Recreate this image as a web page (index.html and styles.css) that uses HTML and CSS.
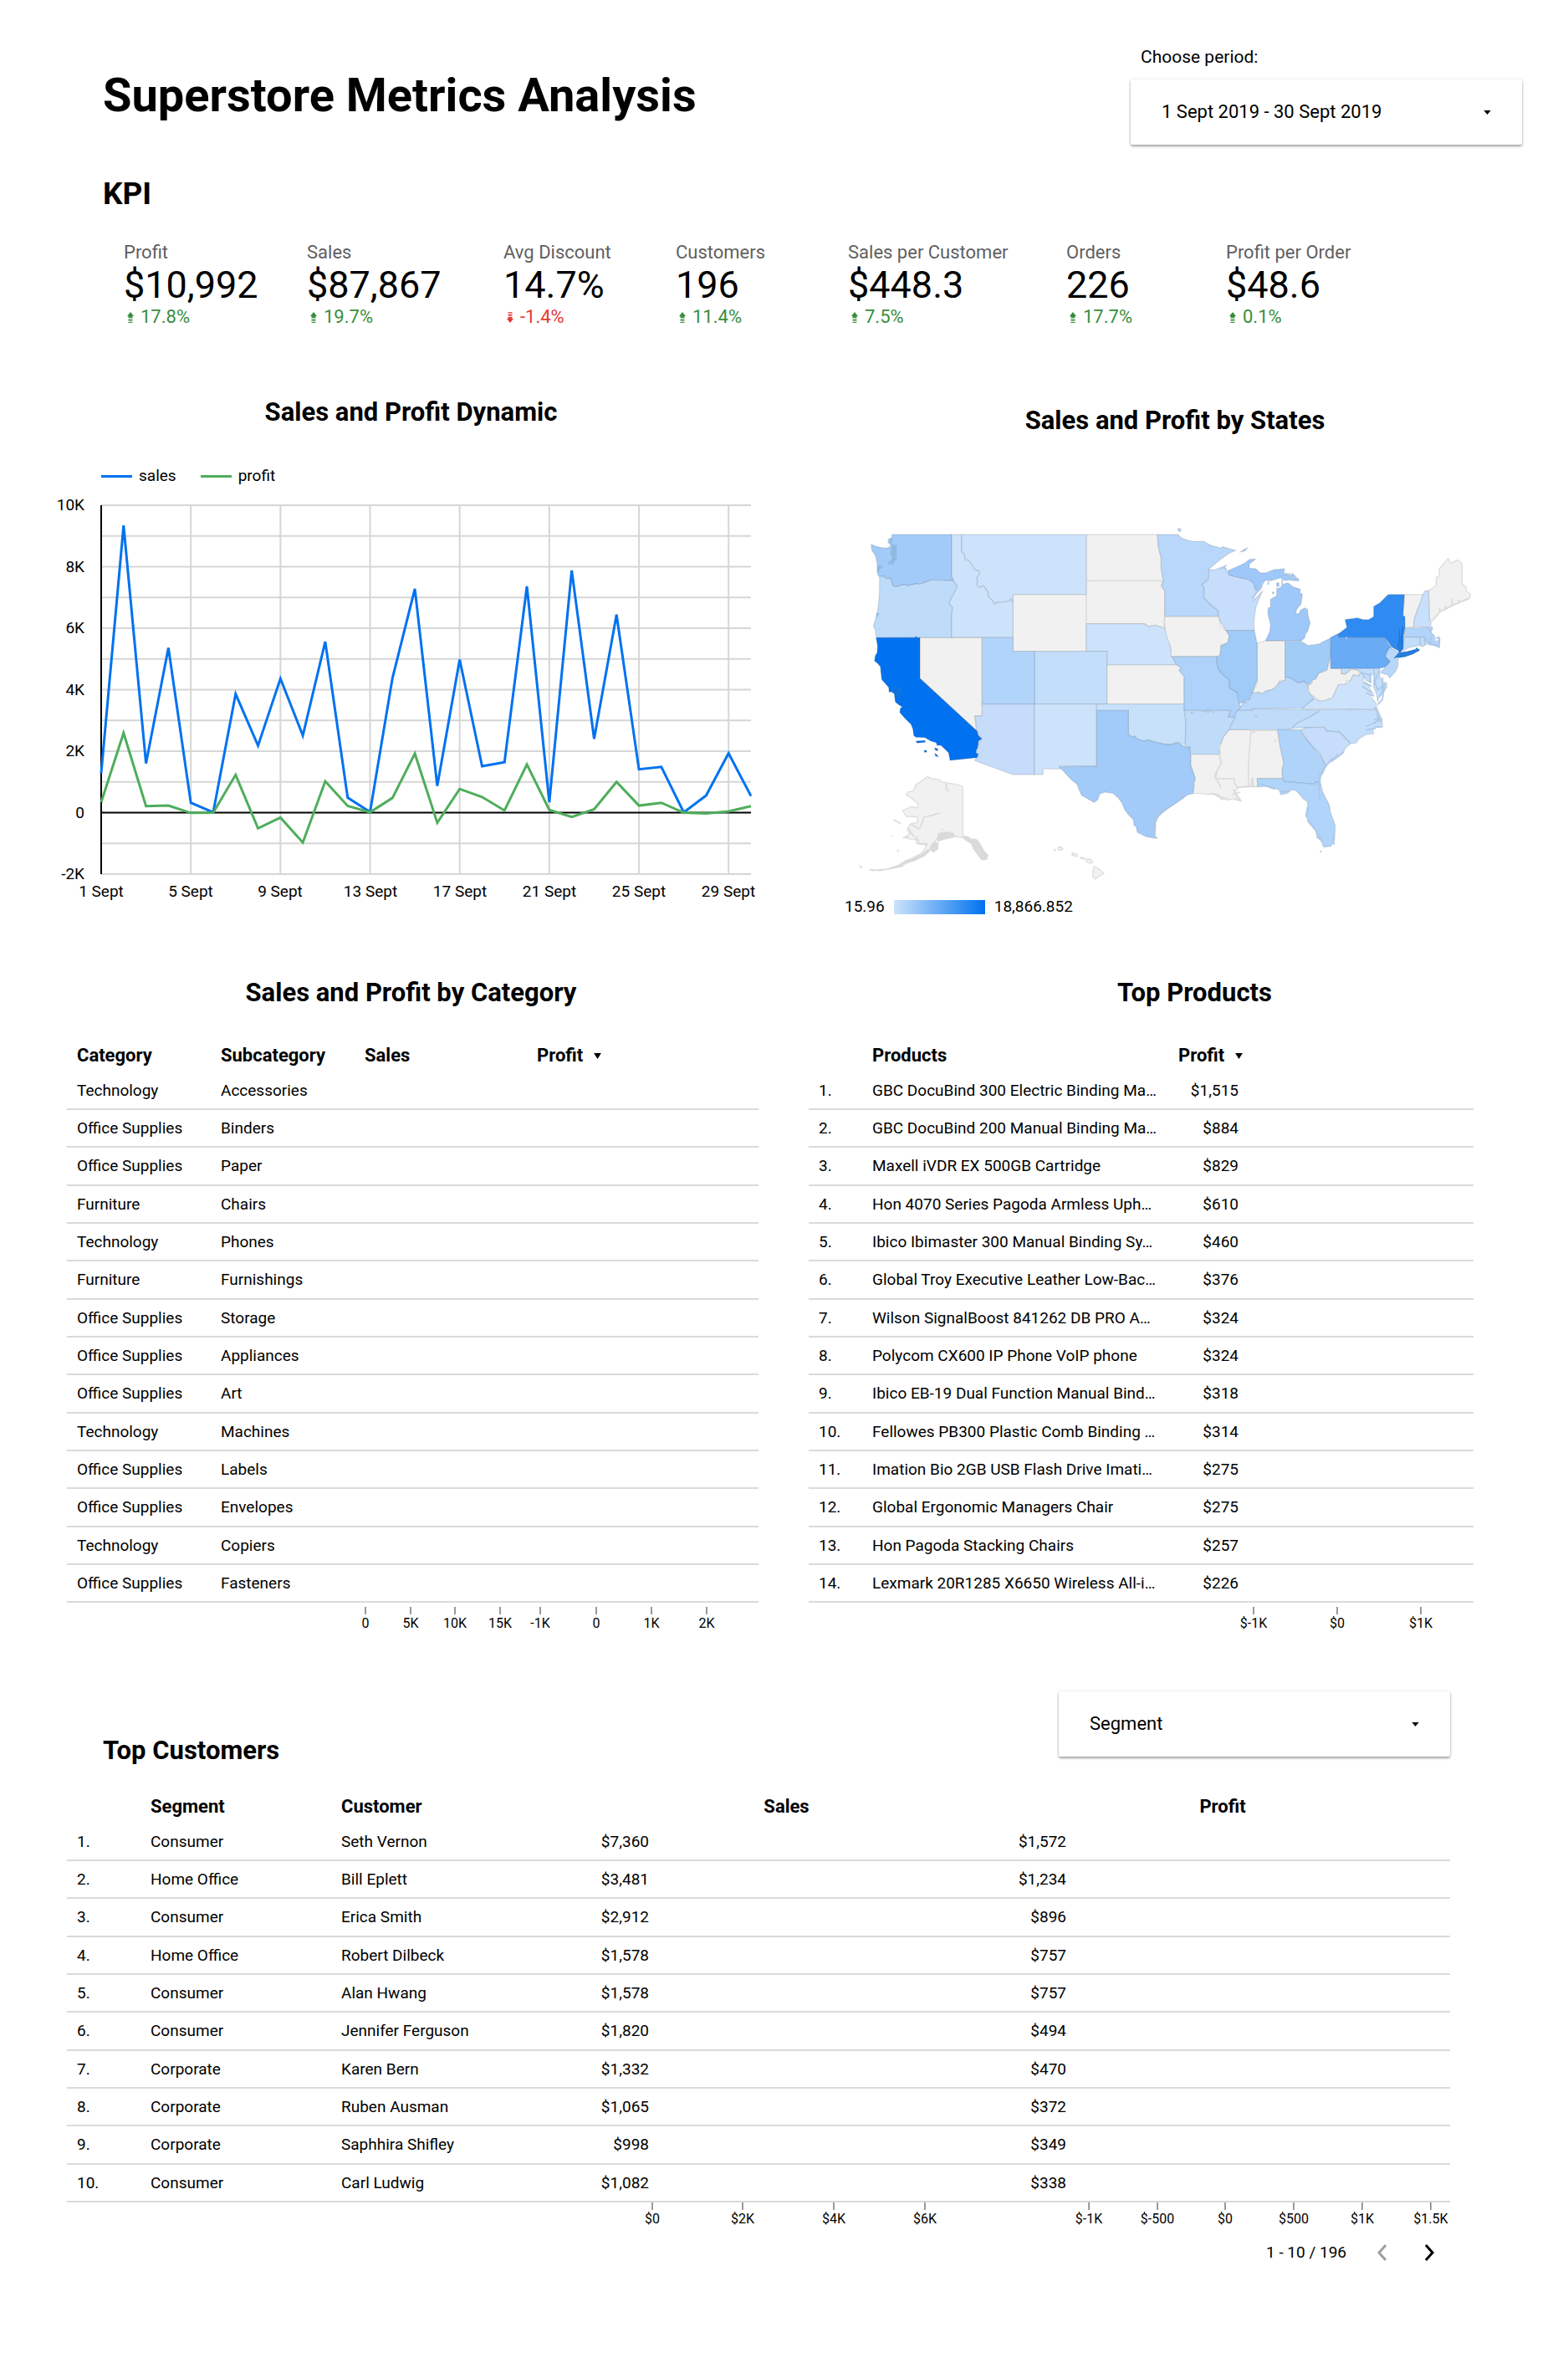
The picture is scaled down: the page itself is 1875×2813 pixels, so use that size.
FILE: index.html
```html
<!DOCTYPE html>
<html lang="en">
<head>
<meta charset="utf-8">
<title>Superstore Metrics Analysis</title>
<link rel="stylesheet" href="styles.css">
</head>
<body>
<svg class="sprite" aria-hidden="true">
  <symbol id="up" viewBox="0 0 8 13"><path d="M4 0L8 5H6.500V7H1.500V5H0zM1.500 8H6.500V9.300H1.500zM1.500 10H6.500V11H1.500zM1.500 12H6.500V13H1.500z"/></symbol>
  <symbol id="down" viewBox="0 0 8 13"><path d="M4 13L8 8H6.500V6H1.500V8H0zM1.500 3.700H6.500V5H1.500zM1.500 2H6.500V3H1.500zM1.500 0H6.500V1H1.500z"/></symbol>
  <symbol id="caret" viewBox="0 0 10 6"><path d="M0 0H10L5 6z"/></symbol>
  <symbol id="sort" viewBox="0 0 10 8"><path d="M0 0H10L5 8z"/></symbol>
</svg>
<header class="top">
  <h1>Superstore Metrics Analysis</h1>
  <div class="period">
    <label for="period">Choose period:</label>
    <button id="period" class="control" type="button"><span>1 Sept 2019 - 30 Sept 2019</span><svg class="caret"><use href="#caret"/></svg></button>
  </div>
</header>
<main>
<section>
  <h2 class="kpi-title">KPI</h2>
  <div class="kpis">
    <div class="kpi"><span class="name">Profit</span><span class="value">$10,992</span><span class="delta"><svg><use href="#up"/></svg>17.8%</span></div>
    <div class="kpi"><span class="name">Sales</span><span class="value">$87,867</span><span class="delta"><svg><use href="#up"/></svg>19.7%</span></div>
    <div class="kpi"><span class="name">Avg Discount</span><span class="value">14.7%</span><span class="delta fall"><svg><use href="#down"/></svg>-1.4%</span></div>
    <div class="kpi"><span class="name">Customers</span><span class="value">196</span><span class="delta"><svg><use href="#up"/></svg>11.4%</span></div>
    <div class="kpi"><span class="name">Sales per Customer</span><span class="value">$448.3</span><span class="delta"><svg><use href="#up"/></svg>7.5%</span></div>
    <div class="kpi"><span class="name">Orders</span><span class="value">226</span><span class="delta"><svg><use href="#up"/></svg>17.7%</span></div>
    <div class="kpi"><span class="name">Profit per Order</span><span class="value">$48.6</span><span class="delta"><svg><use href="#up"/></svg>0.1%</span></div>
  </div>
</section>
<div class="charts">
<section class="dynamic">
  <h2>Sales and Profit Dynamic</h2>
  <div class="legend"><span class="key sales">sales</span><span class="key profit">profit</span></div>
  <svg class="plot" viewBox="0 0 847 500" role="img" aria-label="Daily sales and profit">
    <svg x="61" y="23" width="777" height="441" viewBox="0 0 290 1200" preserveAspectRatio="none" overflow="visible">
      <path class="grid" d="M0 0H290M0 100H290M0 200H290M0 300H290M0 400H290M0 500H290M0 600H290M0 700H290M0 800H290M0 900H290M0 1100H290M0 1200H290M40 0V1200M80 0V1200M120 0V1200M160 0V1200M200 0V1200M240 0V1200M280 0V1200"/>
      <path class="axis" d="M0 0V1200M0 1000H290"/>
      <polyline class="line sales" points="0,872 10,66 20,840 30,464 40,968 50,999 60,614 70,782 80,564 90,749 100,444 110,951 120,998 130,562 140,272 150,913 160,502 170,849 180,836 190,264 200,966 210,212 220,760 230,356 240,859 250,851 260,999 270,944 280,807 290,946"/>
      <polyline class="line profit" points="0,966 10,741 20,979 30,977 40,1001 50,1000 60,877 70,1051 80,1016 90,1097 100,898 110,978 120,999 130,952 140,808 150,1033 160,923 170,949 180,993 190,843 200,991 210,1014 220,989 230,900 240,977 250,968 260,1000 270,1003 280,996 290,979"/>
    </svg>
    <g class="ylab"><text x="41" y="29">10K</text><text x="41" y="103">8K</text><text x="41" y="176">6K</text><text x="41" y="250">4K</text><text x="41" y="323">2K</text><text x="41" y="397">0</text><text x="41" y="470">-2K</text></g>
    <g class="xlab"><text x="61" y="491">1 Sept</text><text x="168" y="491">5 Sept</text><text x="275" y="491">9 Sept</text><text x="383" y="491">13 Sept</text><text x="490" y="491">17 Sept</text><text x="597" y="491">21 Sept</text><text x="704" y="491">25 Sept</text><text x="811" y="491">29 Sept</text></g>
  </svg>
</section>
<section class="states">
  <h2>Sales and Profit by States</h2>
  <svg class="map" viewBox="0 0 2400 1380" role="img" aria-label="Sales by state">
    <g class="state">
      <path fill="#f1f1f1" d="M957 117H1212L1215 160 1225 200 1232 283H957zM957 283H1234L1226 300 1239 320V410L1233 430 1241 455 1205 442 1180 447 1165 437H957zM694 332H957V536H694zM360 487H583V768H557L563 822 360 633zM1031 584H1285L1297 595 1290 605 1307 625V725H1031z"/>
      <path fill="#a2cbf9" d="M260 117H474V265L480 282 402 280 380 288 360 295 345 294 320 300 300 297 275 305 262 300 255 275 240 275 230 266 215 268 209 262 211 240 205 215 203 200 196 185 188 175 185 152 200 158 215 163 240 166 250 163 255 155 244 143 258 138z"/>
      <path fill="#bedbfa" d="M215 268L230 266 240 275 255 275 262 300 275 305 300 297 320 300 345 294 360 295 380 288 402 280 480 282 494 302 482 330 473 345 465 365 478 378 474 400V487L203 485 200 460 193 445 199 425 207 400 213 350 215 320z"/>
      <path fill="#cce3fb" d="M474 117H510V178L520 187 522 205 535 210 545 222 558 243 574 248 572 262 564 272 568 285 563 295 575 308 588 300 606 325V340L618 350 628 366 635 360 660 358 682 355 685 346 694 358V486H474V400L478 378 465 365 473 345 482 330 494 302 480 282 474 265z"/>
      <path fill="#cce3fb" d="M510 117H957V332H694V358L685 346 682 355 660 358 635 360 628 366 618 350 606 340V325L588 300 575 308 563 295 568 285 564 272 572 262 574 248 558 243 545 222 535 210 522 205 520 187 510 178z"/>
      <path fill="#cce3fb" d="M957 437H1165L1180 447 1205 442 1241 455 1252 480 1260 520 1263 553 1272 565 1280 584H1031V536H957z"/>
      <path fill="#c3defb" d="M771 536H1031V725H771z"/>
      <path fill="#b1d4fa" d="M583 487H694V536H771V725H583z"/>
      <path fill="#c6dcfb" d="M583 725H771V978H694L556 928 570 905 562 890 572 880 570 865 582 850 565 822 557 768H583z"/>
      <path fill="#cce3fb" d="M771 725H994V948H860L865 958H802V978H771z"/>
      <path fill="#c8e1fb" d="M994 725H1307L1310 760 1314 790 1312 870 1285 862 1262 870 1240 870 1200 860 1180 854 1165 858 1140 850 1130 840 1125 845 1108 835V748H994z"/>
      <path fill="#a2cbf9" d="M994 748H1108V835L1125 845 1130 840 1140 850 1165 858 1180 854 1200 860 1240 870 1262 870 1285 862 1312 878 1330 880 1332 945 1349 990 1343 1005 1342 1045 1318 1052 1300 1066 1268 1088 1250 1100 1230 1115 1215 1130 1206 1150 1204 1200 1213 1207 1200 1206 1170 1200 1140 1185 1136 1165 1128 1160 1126 1140 1110 1124 1095 1105 1085 1080 1072 1062 1052 1045 1022 1041 1005 1048 998 1068 985 1078 940 1052 930 1030 923 1012 905 998 860 950 994 948z"/>
      <path fill="#0072f0" d="M203 487H360V633L565 822 570 838 582 850 570 858 568 880 562 890V900L569 905 565 917 468 927 463 900 448 885 435 873 422 873 418 863 400 858 378 845 345 844 338 838 335 815 328 797 310 780 288 755 290 740 297 735 285 728 272 718 268 688 256 680 250 683 248 665 223 637 218 590 207 578 197 570 200 552 207 540 208 515zM346 858L378 856 380 862 350 865zM376 891h8v7h-8zM413 882l12 4-2 7-8-3zM413 902l10 6 2 7-9-4z"/>
    </g>
    <path class="coast pacific" d="M262 150L270 160 276 150 275 210 268 208 266 224 258 220 245 224 262 200 254 185zM207 228l18 3-8 10-10 14zM245 135l14-5v20l-6-8zM205 398l8 3-8 14z"/>
    <path class="coast deep" d="M268 662l12 5 12 7-14 5 10 7-8 4 8 14-15-14-12-12zM346 482v16"/>
    <g class="state" transform="translate(1140 0)">
      <path fill="#b8d7fa" d="M72 117H145L160 130 180 137 200 142 240 142 258 155 280 160 300 166 305 160 330 168 355 174 330 184 300 205 258 240 256 275 232 298 240 308 238 343 265 370 290 390 292 410H98V320L86 300 93 283 85 240V200L75 160zM145 95l12 2-2 10-8-2z"/>
      <path fill="#c6ddfb" d="M256 243L278 243 305 233 322 247 330 262 380 275 400 278 418 292 422 310 425 325 415 355 450 318 436 350 425 380 418 430 420 461H318L297 430 292 410 290 390 265 370 238 343 240 308 232 298 256 275z"/>
      <path fill="#9fc8fa" d="M325 247L360 232 385 220 403 206 425 205 402 223 402 238 425 240 440 254 460 255 490 243 528 240 525 258 550 265 557 255 563 272 578 275 578 284 545 280 530 282 515 272 490 280 478 283 470 278 455 285 445 305 430 325 422 310 418 292 400 278 380 275 330 262zM368 180L397 163 385 176zM500 290h8v13h-8zM485 323h5v6h-5z"/>
      <path fill="#9fc8fa" d="M500 310L510 310 525 295 540 290 560 305 585 313 583 326 592 330 588 365 572 385 568 400 578 402 587 388 600 380 611 386 613 410 620 435 615 450 612 463 603 475 600 488 592 495 588 498 460 498 475 465 478 440 468 400 470 380 478 378 478 350 490 342 500 337z"/>
      <path fill="#f1f1f1" d="M98 412H292L295 425 300 448 318 461 330 480 325 505 300 515 297 550 285 555 120 553 122 535 118 515 108 490 100 458 98 430zM430 505L440 503 460 498 530 500V640H510L508 650 492 668 478 675 462 678 450 688 435 683 412 688 420 670 430 650zM692 550L694 597H732V615L745 618 770 600 795 605 795 625 775 620 765 640 750 642 745 655 722 655 700 702 675 712 655 715 635 700 620 690 612 660 628 650 628 638 640 635 650 615 680 605zM958 332H1025L1018 365 1010 375 995 410 992 450H960L958 410 953 408 957 365zM1045 318L1072 300V270L1083 265V240L1115 202 1125 220 1150 208 1165 222V295L1180 305 1180 320 1195 330 1195 343 1170 352 1150 365 1130 372 1110 380 1085 395 1070 415 1056 428 1048 420zM408 820H503L513 880 525 935 520 960V992H430L432 1020 418 1022 412 990 408 1022 400 1022 398 960 403 880zM330 817H408L403 880 398 960 400 1022 360 1025 348 1008 348 993H280L290 955 300 940 295 905V880L310 840zM192 905H293L302 935 290 955 280 975V993H348L348 1010 362 1028 350 1040 360 1055 372 1070 340 1065 330 1070 310 1065 300 1068 290 1050 270 1045 255 1050 230 1046 200 1045 208 990 192 945z"/>
      <path fill="#a0cbf8" d="M318 461H420L428 500 430 510V640L420 665 410 690 406 708 392 712 388 720 378 718 365 724 358 685 328 665 330 638 312 625 290 600 283 570 285 555 297 550 300 515 325 505 330 480z"/>
      <path fill="#a2ccf8" d="M530 500H588L612 515 650 510 690 490 692 550 680 602 650 615 640 635 628 638 622 652 612 655 600 645 575 648 550 632 530 628z"/>
      <path fill="#aed2fa" d="M125 555H285L283 570 290 600 312 625 330 638 328 665 358 685 362 718 372 735 360 748 352 772 325 772 335 748H168V625L150 605 157 595 140 584z"/>
      <path fill="#bad8fa" d="M360 748L372 735 378 718 392 720 398 710 412 702 412 685 435 683 450 688 462 678 478 675 492 668 508 650 510 645 530 640V628L550 632 575 648 600 645 612 655 613 680 635 705 595 740 412 742V748z"/>
      <path fill="#69abf5" d="M692 487L722 472V485H888L898 505 912 525 895 540 890 555 908 572 890 592 865 598H694z"/>
      <path fill="#2f8bf2" d="M745 422L790 416 810 422 830 422 848 412V375L870 362 900 332H958L953 408 960 412V452L955 480V525L945 537 925 528 912 520 888 485H722L720 475 752 450zM922 562L935 545 965 540 990 532 1012 530 990 545 960 555z"/>
      <path fill="#c8e0fb" d="M1025 332L1030 320 1045 318 1048 420 1055 438 1045 448H992V425L1010 375z"/>
      <path fill="#b1d4fa" d="M960 452H1000L1045 450 1055 446 1060 453 1053 468 1066 480 1068 500 1081 498 1078 484 1086 490 1084 522 1062 515 1045 512 1030 485H958z"/>
      <path fill="#c3defb" d="M958 485H1015V515L975 522 953 535zM1015 485H1030L1040 510 1022 520 1015 515z"/>
      <path fill="#b8d7fa" d="M905 522L935 538V590L925 610 905 632 900 622 872 612 890 592 908 572 890 555 895 540z"/>
      <path fill="#c3defb" d="M732 598H868L870 625 880 645 895 650V665L880 690 868 700 862 718 858 690 848 665 850 620 835 618 840 650 820 640 810 620 795 605 770 598 745 618 732 615z"/>
      <path fill="#cce3fb" d="M590 742L635 705 655 715 675 712 700 702 722 655 745 655 765 640 775 620 795 625 800 610 815 630 808 640 840 660 830 665 848 690 835 695 855 720 862 745z"/>
      <path fill="#c3defb" d="M550 812L570 795 620 770 650 752V745H862L878 780 880 808 862 808 845 818 848 832 820 835 795 850 785 865 765 867 725 825 680 822 670 808 600 810z"/>
      <path fill="#bedbfa" d="M358 748H412V742L650 745V752L620 770 570 795 550 817H330L340 790z"/>
      <path fill="#c6ddfb" d="M587 820L600 810 670 808 680 822 725 825 765 867 745 885 740 900 715 920 675 945 655 900 630 880 610 855z"/>
      <path fill="#b0d3fa" d="M503 817H590L587 825 610 855 630 880 655 905 675 945 660 975 655 1008 640 1004 635 1014 525 1002 520 985V960L525 935 513 880z"/>
      <path fill="#b1d4fa" d="M430 992H520L528 1003 635 1012 640 1004 658 1010 665 1040 690 1090 692 1110 710 1160 708 1210 695 1235 668 1238 660 1215 645 1205 640 1180 612 1148 605 1120 612 1105 610 1075 595 1065 570 1035 550 1032 540 1045 515 1050 510 1035 490 1025 470 1020 432 1022z"/>
      <path fill="#bedbfa" d="M170 748H335L325 772H352L335 800 330 817 310 840 295 880V905H190V880L172 876 174 790z"/>
    </g>
    <g transform="translate(1140 0)">
      <path class="coast" d="M800 612l38 10M810 650l30 10M806 660l35 24M820 685l30 12M838 620l-5 28M850 600v60M870 600l-18 45 10 30 25-20-8 55-18 18M880 630v45l-12 25M765 740v8M850 735l12 20 0 25 14 0-30 12M862 762l12 25-24-8M820 805l36-14M820 818l30-5M874 808l-22-2M740 895l-20 20M720 905l-22 25M700 918l-25 32M675 950l-14 30M655 970v50M650 1010l4 55M440 1010l30 12 25 8M510 1040l40-3M610 1095l-5 35M615 1145l30 40M650 1190l12 30M700 1195l6 35M1045 452l10 20M1045 508l15-30M1050 505l35 15M1070 490l12-4v38M1015 485v30M1030 488v25M230 750l30 4M250 740l25 16M250 150l20 12M310 230l10 14M300 240l20-14M450 290l-10 20M470 280v18M520 275v25M412 345l35-40M530 255l28 15M560 260l18 22M545 255l5 25M655 1252l6 4M750 484v8M420 765l10 8"/>
      <path class="coast" d="M190 755l12 3M60 1120l40-25 20-10M55 1140l22-25M50 1150l20-15M60 1160v40M55 1165l12 0M150 1050l14 10M160 1045l5 20"/>
      <path class="coast north" d="M1060 425l20-25M1085 400v-18M1095 390l40-20M1105 388v-16M1128 375v-28M1130 370l60-22M1150 365l5-14M260 1045l35 10M285 1055l40 12M345 1030l10 25 15 15M340 1050l30-10M345 1065l28 8M395 1020l35 2M355 1025l45-5M298 870l-5 20M300 895l-8 15M285 970l-8 16M285 995l15 30M408 820l15 8M500 855l-10 4M412 1020l4-30"/>
      <path class="coast deep filled" d="M940 455v30l-6 30 6 27 8-10 4-85-8 60M922 560l16-18 30-4 30-8 4-6 10 8-24 12-28 10-30 2z"/>
    </g>
    <g class="state" fill="#f1f1f1">
      <path d="M388 985L400 992 430 996 440 1005 475 1010 500 1015 514 1022V1200L530 1205 550 1210 570 1235 585 1255 602 1270 598 1283 580 1282 560 1255 545 1225 520 1207 490 1200 470 1190 440 1190 425 1205 412 1220 395 1245 370 1268 340 1285 300 1302 270 1312 220 1322 180 1320 240 1318 290 1300 330 1280 365 1260 380 1240 385 1225 348 1225V1212L325 1210 305 1203 322 1190 315 1175 325 1155 350 1150 352 1130 310 1128 298 1107 330 1092 350 1098 355 1085 332 1065 310 1050 318 1040 335 1038 345 1015z"/>
      <path d="M855 1240l12-4 6 8-6 6-10-2zM840 1248l6-2 0 6zM905 1258l20 6-3 8-15-4zM935 1274l15 2-2 6-10-3zM955 1280l18 2 8 10-10 5-14-6zM985 1308L1005 1318 1020 1333 1003 1342 990 1354 980 1345 980 1325z"/>
    </g>
    <path class="coast north filled" d="M516 1199l18 2 12 14 8-7 14 6 14 24 10 16 12 12-4 16-18 2-16-24-14-16-6-18-24-14zM425 1190l30-6 24 4 8 12-20 6-20 4-24 8zM402 1228l14-8 10 4-2 22-16 10-10-6zM332 1278l36-14 20-18 8 6-20 18-34 16-34 10-20 4 18-12z"/>
    <path class="coast north" d="M266 1140l10 5 16 10M258 1196l4 3M278 1248l6 6M142 1306l12 6M180 1320l20 2M210 1323l90-17M455 1010v20l8 8M360 1170l15-40 30-6 25-8M328 1155l30 20M318 1170l20 30M440 1172v8M350 1225l38 5M300 1204l20-4M345 1200l12 20"/>
  </svg>
  <div class="scale"><span>15.96</span><i></i><span>18,866.852</span></div>
</section>
</div>
<div class="tables">
<section class="categories">
  <h2>Sales and Profit by Category</h2>
  <table>
    <colgroup><col class="c-cat"><col class="c-cat"><col class="c-sales"><col></colgroup>
    <thead><tr><th>Category</th><th>Subcategory</th><th>Sales</th><th>Profit<svg class="sort"><use href="#sort"/></svg></th></tr></thead>
    <tbody>
      <tr><td>Technology</td><td>Accessories</td><td></td><td></td></tr>
      <tr><td>Office Supplies</td><td>Binders</td><td></td><td></td></tr>
      <tr><td>Office Supplies</td><td>Paper</td><td></td><td></td></tr>
      <tr><td>Furniture</td><td>Chairs</td><td></td><td></td></tr>
      <tr><td>Technology</td><td>Phones</td><td></td><td></td></tr>
      <tr><td>Furniture</td><td>Furnishings</td><td></td><td></td></tr>
      <tr><td>Office Supplies</td><td>Storage</td><td></td><td></td></tr>
      <tr><td>Office Supplies</td><td>Appliances</td><td></td><td></td></tr>
      <tr><td>Office Supplies</td><td>Art</td><td></td><td></td></tr>
      <tr><td>Technology</td><td>Machines</td><td></td><td></td></tr>
      <tr><td>Office Supplies</td><td>Labels</td><td></td><td></td></tr>
      <tr><td>Office Supplies</td><td>Envelopes</td><td></td><td></td></tr>
      <tr><td>Technology</td><td>Copiers</td><td></td><td></td></tr>
      <tr><td>Office Supplies</td><td>Fasteners</td><td></td><td></td></tr>
    </tbody>
    <tfoot><tr><td colspan="2"></td>
      <td><svg class="ticks" viewBox="0 0 206 39"><path d="M13 5V14M67 5V14M120 5V14M174 5V14"/><text x="13" y="30">0</text><text x="67" y="30">5K</text><text x="120" y="30">10K</text><text x="174" y="30">15K</text></svg></td>
      <td><svg class="ticks" viewBox="0 0 277 39"><path d="M16 5V14M83 5V14M149 5V14M215 5V14"/><text x="16" y="30">-1K</text><text x="83" y="30">0</text><text x="149" y="30">1K</text><text x="215" y="30">2K</text></svg></td></tr></tfoot>
  </table>
</section>
<section class="products">
  <h2>Top Products</h2>
  <table>
    <colgroup><col class="p-num"><col class="p-name"><col class="p-val"><col></colgroup>
    <thead><tr><th></th><th>Products</th><th colspan="2">Profit<svg class="sort"><use href="#sort"/></svg></th></tr></thead>
    <tbody>
      <tr><td>1.</td><td>GBC DocuBind 300 Electric Binding Ma…</td><td class="num">$1,515</td><td></td></tr>
      <tr><td>2.</td><td>GBC DocuBind 200 Manual Binding Ma…</td><td class="num">$884</td><td></td></tr>
      <tr><td>3.</td><td>Maxell iVDR EX 500GB Cartridge</td><td class="num">$829</td><td></td></tr>
      <tr><td>4.</td><td>Hon 4070 Series Pagoda Armless Uph…</td><td class="num">$610</td><td></td></tr>
      <tr><td>5.</td><td>Ibico Ibimaster 300 Manual Binding Sy…</td><td class="num">$460</td><td></td></tr>
      <tr><td>6.</td><td>Global Troy Executive Leather Low-Bac…</td><td class="num">$376</td><td></td></tr>
      <tr><td>7.</td><td>Wilson SignalBoost 841262 DB PRO A…</td><td class="num">$324</td><td></td></tr>
      <tr><td>8.</td><td>Polycom CX600 IP Phone VoIP phone</td><td class="num">$324</td><td></td></tr>
      <tr><td>9.</td><td>Ibico EB-19 Dual Function Manual Bind…</td><td class="num">$318</td><td></td></tr>
      <tr><td>10.</td><td>Fellowes PB300 Plastic Comb Binding …</td><td class="num">$314</td><td></td></tr>
      <tr><td>11.</td><td>Imation Bio 2GB USB Flash Drive Imati…</td><td class="num">$275</td><td></td></tr>
      <tr><td>12.</td><td>Global Ergonomic Managers Chair</td><td class="num">$275</td><td></td></tr>
      <tr><td>13.</td><td>Hon Pagoda Stacking Chairs</td><td class="num">$257</td><td></td></tr>
      <tr><td>14.</td><td>Lexmark 20R1285 X6650 Wireless All-i…</td><td class="num">$226</td><td></td></tr>
    </tbody>
    <tfoot><tr><td colspan="3"></td>
      <td><svg class="ticks" viewBox="0 0 281 39"><path d="M18 5V14M118 5V14M218 5V14"/><text x="18" y="30">$-1K</text><text x="118" y="30">$0</text><text x="218" y="30">$1K</text></svg></td></tr></tfoot>
  </table>
</section>
</div>
<section class="customers">
  <div class="bar">
    <h2>Top Customers</h2>
    <div class="picker">
      <select class="control" aria-label="Segment"><option>Segment</option></select>
      <svg class="caret"><use href="#caret"/></svg>
    </div>
  </div>
  <table>
    <colgroup><col class="k-num"><col class="k-seg"><col class="k-name"><col class="k-val"><col class="k-bar"><col class="k-val"><col></colgroup>
    <thead><tr><th></th><th>Segment</th><th>Customer</th><th colspan="2" class="mid">Sales</th><th colspan="2" class="mid">Profit</th></tr></thead>
    <tbody>
      <tr><td>1.</td><td>Consumer</td><td>Seth Vernon</td><td class="num">$7,360</td><td></td><td class="num">$1,572</td><td></td></tr>
      <tr><td>2.</td><td>Home Office</td><td>Bill Eplett</td><td class="num">$3,481</td><td></td><td class="num">$1,234</td><td></td></tr>
      <tr><td>3.</td><td>Consumer</td><td>Erica Smith</td><td class="num">$2,912</td><td></td><td class="num">$896</td><td></td></tr>
      <tr><td>4.</td><td>Home Office</td><td>Robert Dilbeck</td><td class="num">$1,578</td><td></td><td class="num">$757</td><td></td></tr>
      <tr><td>5.</td><td>Consumer</td><td>Alan Hwang</td><td class="num">$1,578</td><td></td><td class="num">$757</td><td></td></tr>
      <tr><td>6.</td><td>Consumer</td><td>Jennifer Ferguson</td><td class="num">$1,820</td><td></td><td class="num">$494</td><td></td></tr>
      <tr><td>7.</td><td>Corporate</td><td>Karen Bern</td><td class="num">$1,332</td><td></td><td class="num">$470</td><td></td></tr>
      <tr><td>8.</td><td>Corporate</td><td>Ruben Ausman</td><td class="num">$1,065</td><td></td><td class="num">$372</td><td></td></tr>
      <tr><td>9.</td><td>Corporate</td><td>Saphhira Shifley</td><td class="num">$998</td><td></td><td class="num">$349</td><td></td></tr>
      <tr><td>10.</td><td>Consumer</td><td>Carl Ludwig</td><td class="num">$1,082</td><td></td><td class="num">$338</td><td></td></tr>
    </tbody>
    <tfoot><tr><td colspan="4"></td>
      <td><svg class="ticks" viewBox="0 0 414 31"><path d="M4 0V9M112 0V9M221 0V9M330 0V9"/><text x="4" y="25">$0</text><text x="112" y="25">$2K</text><text x="221" y="25">$4K</text><text x="330" y="25">$6K</text></svg></td><td></td>
      <td><svg class="ticks" viewBox="0 0 459 31"><path d="M27 0V9M109 0V9M190 0V9M272 0V9M354 0V9M436 0V9"/><text x="27" y="25">$-1K</text><text x="109" y="25">$-500</text><text x="190" y="25">$0</text><text x="272" y="25">$500</text><text x="354" y="25">$1K</text><text x="436" y="25">$1.5K</text></svg></td></tr></tfoot>
  </table>
  <nav class="pager" aria-label="Pages">
    <span>1 - 10 / 196</span>
    <button type="button" aria-label="Previous" disabled><svg viewBox="0 0 12 20"><path d="M10 1L2 10 10 19"/></svg></button>
    <button type="button" aria-label="Next"><svg viewBox="0 0 12 20"><path d="M2 1L10 10 2 19"/></svg></button>
  </nav>
</section>
</main>
</body>
</html>
```
FILE: styles.css
```css
*, *::before, *::after { box-sizing: border-box; }
body { margin: 0; background: #fff; color: #000; font-family: Roboto, sans-serif; font-size: 19px; line-height: 24px; }
h1, h2 { margin: 0; font-weight: 700; }
h1 { font-size: 56px; line-height: 64px; margin-top: 26px; }
h2 { font-size: 31px; line-height: 36px; text-align: center; }
svg { display: block; }
.sprite { display: none; }

.top { display: flex; justify-content: space-between; align-items: flex-start; padding: 56px 55px 0 123px; }
.period { width: 468px; font-size: 21px; }
.period label { display: block; padding-left: 12px; margin-bottom: 15px; }
.control { width: 100%; height: 78px; padding: 0 37px; border: 0; border-radius: 2px; background: #fff; color: #000; font: 22px/24px Roboto, sans-serif; text-align: left; box-shadow: 0 2px 3px rgba(0,0,0,.34), 0 0 3px rgba(0,0,0,.12); appearance: none; }
button.control { display: flex; align-items: center; justify-content: space-between; }
.caret { width: 9px; height: 5px; }

.kpi-title { font-size: 37px; line-height: 44px; text-align: left; padding-left: 123px; margin-top: 37px; }
.kpis { display: grid; grid-template-columns: 219fr 235fr 206fr 206fr 261fr 191fr 152fr; padding: 36px 257px 0 148px; }
.kpi { display: flex; flex-direction: column; gap: 4px; white-space: nowrap; font-size: 22px; }
.name { color: #5f5f5f; }
.value { font-size: 45px; line-height: 45px; }
.delta { display: flex; align-items: center; gap: 8px; padding-left: 4px; color: #388e3c; fill: #388e3c; }
.delta svg { width: 8px; height: 13px; }
.fall { color: #e53935; fill: #e53935; }

.charts { display: grid; grid-template-columns: 847fr 800fr; column-gap: 73px; padding: 0 95px 0 60px; margin-top: 84px; }
.dynamic h2 { padding-left: 16px; }
.states h2 { padding-left: 50px; margin: 10px 0 79px; }
.legend { display: flex; gap: 29px; padding-left: 61px; margin-top: 46px; }
.key { display: flex; align-items: center; gap: 8px; }
.key::before { content: ""; width: 37px; height: 3px; background: #0072f0; }
.key.profit::before { background: #4fad5b; }
.plot, .map { width: 100%; height: auto; }
.plot text { font-size: 19px; }
.ylab { text-anchor: end; }
.xlab, .ticks { text-anchor: middle; }
.grid, .axis, .line { fill: none; vector-effect: non-scaling-stroke; stroke-width: 2px; }
.grid { stroke: #d6d6d6; }
.axis { stroke: #000; }
.line { stroke-width: 3px; }
.line.sales { stroke: #0072f0; }
.line.profit { stroke: #4fad5b; }
.state path { stroke: rgba(0,0,0,.1); stroke-width: 4px; stroke-linejoin: round; }
.coast { fill: none; stroke: #adc8e6; stroke-width: 5px; }
.coast.pacific { fill: #91b8e1; stroke: #91b8e1; stroke-width: 2px; }
.coast.deep { stroke: #1c74d2; }
.coast.north { stroke: #dadada; }
.coast.filled { stroke-width: 3px; }
.coast.deep.filled { fill: #2a7fdc; }
.coast.north.filled { fill: #dadada; }
.scale { display: flex; align-items: center; gap: 11px; padding-left: 30px; margin-top: 12px; }
.scale i { width: 109px; height: 17px; background: linear-gradient(90deg, #cce3fb, #0072f0); }

.tables { display: grid; grid-template-columns: 827fr 795fr; column-gap: 60px; padding: 0 113px 0 80px; margin-top: 73px; }
.categories h2 { padding-right: 4px; }
.products h2 { padding-left: 128px; }
table { width: 100%; table-layout: fixed; border-collapse: separate; border-spacing: 0; margin-top: 36px; }
th, td { padding: 0 0 0 12px; text-align: left; white-space: nowrap; }
th { height: 41px; font-size: 22px; font-weight: 700; }
tbody td { height: 45px; border-bottom: 2px solid #dadada; }
tbody tr:nth-child(3n) td { height: 46px; }
tfoot td { padding: 0; }
td.num { padding: 0; text-align: right; }
th.mid { padding: 0; text-align: center; }
.sort { display: inline-block; width: 9px; height: 7px; margin: 0 0 3px 13px; }
.ticks { width: 100%; height: auto; overflow: visible; }
.ticks path { stroke: #333; stroke-width: 1px; }
.ticks text { font-size: 16px; }
.c-cat { width: 172px; }
.c-sales { width: 206px; }
.p-num { width: 64px; }
.p-name { width: 366px; }
.p-val { width: 84px; }

.customers { padding: 0 141px 0 80px; margin-top: 67px; }
.bar { display: flex; justify-content: space-between; padding-left: 43px; }
.bar h2 { margin-top: 53px; }
.picker { display: grid; width: 468px; height: 78px; align-items: center; }
.picker > * { grid-area: 1 / 1; }
.picker .caret { justify-self: end; margin-right: 37px; pointer-events: none; }
.customers table { margin-top: 28px; }
.k-num { width: 88px; }
.k-seg { width: 228px; }
.k-name { width: 295px; }
.k-val { width: 85px; }
.k-bar { width: 414px; }
.pager { display: flex; justify-content: flex-end; align-items: center; margin: 11px -3px 101px 0; }
.pager span { margin-right: 15px; }
.pager button { display: flex; align-items: center; justify-content: center; width: 56px; height: 36px; padding: 0; border: 0; background: none; }
.pager svg { width: 12px; height: 20px; fill: none; stroke: #000; stroke-width: 3px; }
.pager button:disabled svg { stroke: #9e9e9e; }
```
